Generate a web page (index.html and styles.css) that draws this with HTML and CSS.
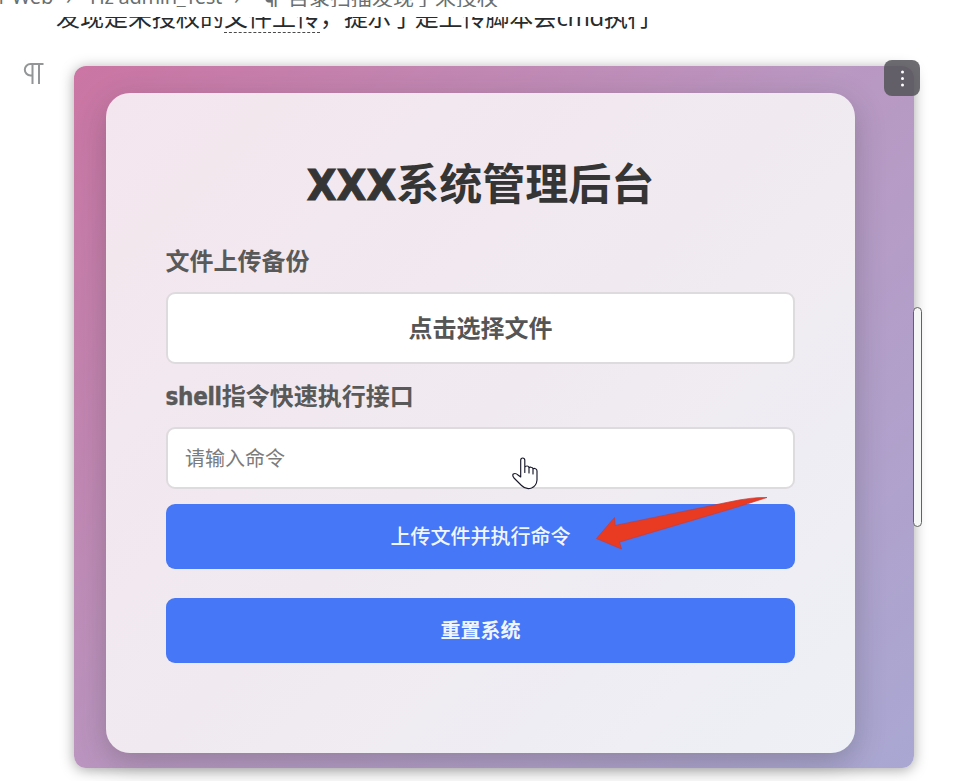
FILE: index.html
```
<!DOCTYPE html>
<html lang="zh-CN">
<head>
<meta charset="utf-8">
<title>Web</title>
<link rel="stylesheet" href="styles.css">
</head>
<body>
<nav class="crumbs">
  <span class="crumb crumb-root">1 Web</span><span class="sep">›</span><span class="crumb crumb-page">Hz admin_Test</span><span class="sep sep-last">›</span><span class="pilcrow">¶</span><span class="crumb">目录扫描发现了未授权</span>
</nav>
<main class="note">
  <div class="line"><p class="paragraph">发现是未授权的<span class="spell">文件上传</span>，<span class="rest">提示了是上传脚本会cmd执行</span></p></div>
  <div class="block">
    <svg class="mark" viewBox="0 0 22 22" fill="none" stroke="#929696" stroke-width="2"><path d="M20.500 1H7.500a5.700 5.700 0 0 0 0 11.400H10M9.500 1V21M16 1V21"/></svg>
    <section class="panel">
      <button class="more"><svg viewBox="0 0 36 36" fill="#fff"><circle cx="18.500" cy="12" r="1.500"/><circle cx="18.500" cy="18.500" r="1.500"/><circle cx="18.500" cy="25" r="1.500"/></svg></button>
      <div class="card">
        <h1><span class="latin">XXX</span>系统管理后台</h1>
        <div class="label">文件上传备份</div>
        <div class="picker">点击选择文件</div>
        <div class="label label-shell"><span class="latin-small">shell</span>指令快速执行接口</div>
        <div class="command">请输入命令</div>
        <button class="action">上传文件并执行命令</button>
        <button class="action action-reset">重置系统</button>
      </div>
      <svg class="arrow" viewBox="0 0 176 56"><path d="M4.500 42.500L22.500 21.500L23 29.500L137 6Q160 1 175 1.500Q155 8 137 13.500L27.500 46L29.500 53Z" fill="#e93a22" stroke="#c43b3c" stroke-width=".7"/></svg>
      <svg class="hand" viewBox="0 0 28 34"><path d="M9.700 21V4.200Q9.700 2 11.700 2T13.800 4.200V16.500V11.500Q14 10 16 10Q18 10 18 12V17V12Q18.500 10.700 20.200 11.200Q22 11.500 22 13V18V13Q23 11.800 24.500 12.800Q26 13.300 26 15V24Q25.500 30 20.500 32Q15 34 10.500 29.500L3 22Q1 19.500 2.300 18Q4.500 16.700 7 19Z" fill="#fff" stroke="#171729" stroke-width="1.150" stroke-linejoin="round"/></svg>
    </section>
    <div class="thumb"></div>
  </div>
</main>
</body>
</html>
```
FILE: styles.css
```
* { box-sizing: border-box; }
body {
  margin: 0;
  height: 781px;
  overflow: hidden;
  background: #fff;
  font-family: "Noto Sans", "Noto Sans CJK SC", sans-serif;
}
.crumbs {
  height: 7px;
  overflow: hidden;
  display: flex;
  align-items: flex-end;
  color: #6a6f6f;
  font-size: 20px;
  line-height: 30px;
  white-space: nowrap;
}
.crumb, .sep, .pilcrow { flex: none; height: 30px; margin-bottom: -5px; }
.crumb-root { width: 60px; margin-left: -5px; }
.crumb-page { width: 135px; letter-spacing: -.3px; }
.sep { width: 35px; padding-left: 11px; }
.sep-last { width: 39px; padding-left: 9px; }
.pilcrow { width: 24px; font-weight: 700; font-size: 22px; margin-bottom: -7px; }
.crumb:last-child { font-size: 21px; margin-bottom: -5px; }
.note { padding-top: 10px; }
.line { height: 17px; display: flex; align-items: flex-end; clip-path: inset(0 0 -10px 0); }
.paragraph {
  margin: 0 0 -1px 56px;
  color: #282b2b;
  font-size: 24px;
  line-height: 36px;
  white-space: nowrap;
}
.spell { border-bottom: 1px dashed #4a4a4a; display: inline-block; height: 34px; }
.rest { letter-spacing: -.4px; }
.block { display: flex; position: relative; margin-top: 32px; }
.mark { width: 22px; height: 22px; margin: -3px 29px 0 23px; flex: none; }
.panel {
  position: relative;
  width: 840px;
  height: 702px;
  flex: none;
  padding: 27px 59px 15px 32px;
  border-radius: 12px;
  background: linear-gradient(135deg, #cb75a3 0%, #b998c2 50%, #a9a8d3 100%);
  box-shadow: 0 2px 14px rgba(0, 0, 0, .35);
}
.card {
  height: 660px;
  display: flex;
  flex-direction: column;
  padding: 59px 60px 0;
  border-radius: 24px;
  background: linear-gradient(135deg, #f4e6ee, #f0eaf0 50%, #edf0f6);
  box-shadow: 0 9px 30px rgba(50, 50, 50, .28);
  font-family: "DejaVu Sans Condensed", "Noto Sans CJK SC", sans-serif;
}
h1 {
  margin: 0;
  height: 64px;
  text-align: center;
  font-family: "DejaVu Sans", "Noto Sans CJK SC", sans-serif;
  font-stretch: condensed;
  font-size: 43px;
  line-height: 66px;
  color: #353535;
}
.latin { -webkit-text-stroke: 1px #353535; }
.label {
  height: 36px;
  margin-top: 28px;
  font-family: "DejaVu Sans", "Noto Sans CJK SC", sans-serif;
  font-stretch: condensed;
  font-size: 24px;
  line-height: 36px;
  font-weight: 700;
  color: #595959;
  text-indent: -.5px;
}
.latin-small { letter-spacing: -.3px; -webkit-text-stroke: .4px #595959; }
.picker, .command { background: #fff; border: 2px solid #dedbde; border-radius: 9px; }
.picker {
  height: 72px;
  margin-top: 12px;
  text-align: center;
  font-size: 24px;
  line-height: 71px;
  font-weight: 700;
  color: #555;
}
.label-shell { margin-top: 15px; }
.command {
  height: 62px;
  margin-top: 12px;
  padding-left: 17px;
  font-size: 20px;
  line-height: 60px;
  color: #7b7b7b;
}
.action {
  height: 65px;
  margin: 15px 0 0;
  padding: 0 0 2px;
  border: 0;
  border-radius: 9px;
  background: #4577f6;
  color: #f0f6ff;
  font: 500 20px "Noto Sans CJK SC", sans-serif;
}
.action-reset { margin-top: 29px; font-weight: 700; }
.more {
  position: absolute;
  top: -6px;
  right: -6px;
  width: 36px;
  height: 36px;
  padding: 0;
  border: 0;
  border-radius: 8px;
  background: rgba(85, 85, 90, .86);
}
.more svg { display: block; }
.arrow { position: absolute; left: 518px; top: 430px; width: 176px; height: 56px; }
.hand { position: absolute; left: 437px; top: 390px; width: 28px; height: 34px; }
.thumb {
  position: absolute;
  left: 912.500px;
  top: 241px;
  width: 9px;
  height: 220px;
  border: 1.5px solid #626262;
  border-radius: 5px;
  background: #f5f6f6;
}
```
